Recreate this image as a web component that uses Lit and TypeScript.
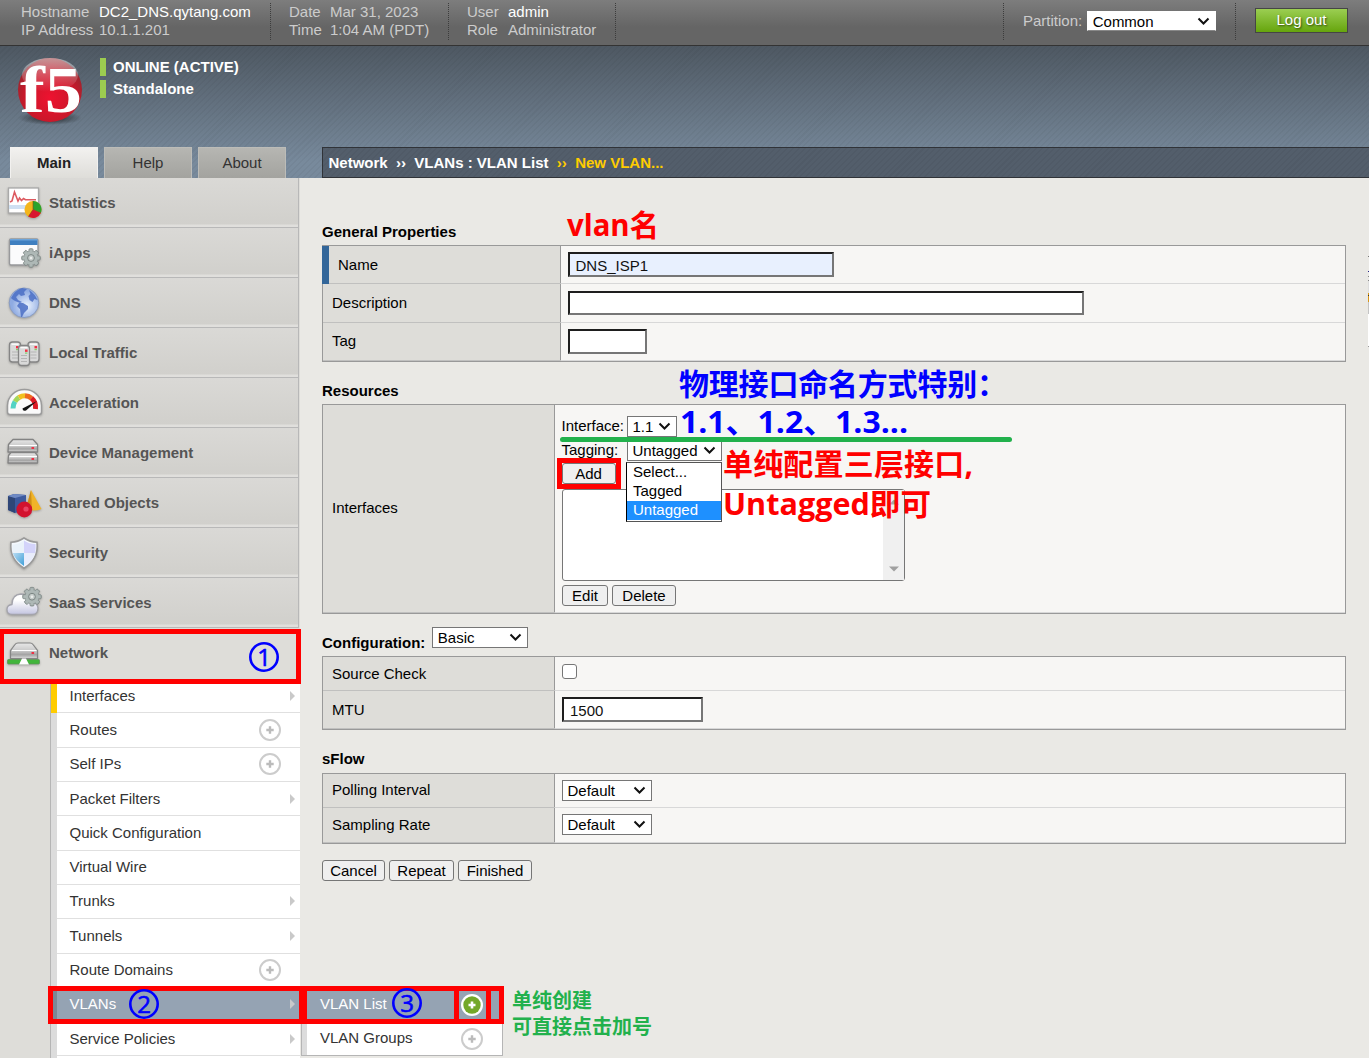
import { LitElement, html, css, svg, nothing } from "lit";
import { customElement, property } from "lit/decorators.js";
import { classMap } from "lit/directives/class-map.js";

const gear = (cx: number, cy: number, r: number) => svg`
  <g transform="translate(${cx} ${cy})">
    ${[0, 45, 90, 135].map(
      (a) => svg`<rect x="-2" y=${-r} width="4" height=${r * 2} rx="1" fill="#a3adab" stroke="#7b8583" stroke-width=".8" transform="rotate(${a})"/>`
    )}
    <circle r=${r - 2.2} fill="#aeb8b6" stroke="#87918f" stroke-width=".8"/>
    ${[0, 45, 90, 135].map(
      (a) => svg`<rect x="-1.5" y=${-r + 1} width="3" height=${r * 2 - 2} fill="#aeb8b6" transform="rotate(${a})"/>`
    )}
    <circle r="3.4" fill="#c4cbc9" stroke="#7b8583" stroke-width="1"/>
    <circle r="1.3" fill="#e9ecea"/>
  </g>`;

const tower = (x: number, y: number, h: number) => svg`
  <rect x=${x} y=${y} width="11" height=${h} rx="3" fill="#d9d9d9" stroke="#858585" stroke-width="1.3"/>
  <path d="M${x + 2} ${y + 2.2}h7" stroke="#fff" stroke-width="1.2"/>
  <path d="M${x + 2.5} ${y + 10}h6M${x + 2.5} ${y + 13}h6M${x + 2.5} ${y + 16}h6" stroke="#b5b5b5"/>
  <rect x=${x + 6.5} y=${y + 4} width="2.6" height="2.4" fill="#ee3344"/>
  <rect x=${x + 6.5} y=${y + 7} width="2.4" height="1.2" fill="#7fd069"/>`;

const icons: Record<string, unknown> = {
  stats: svg`
    <rect x="8.5" y="10" width="30" height="25" fill="#fff" stroke="#a9a9a9" stroke-width="1.3"/>
    <path d="M9 27h29v4H9z" fill="#cfe0f2"/>
    <path d="M10 24l2-1 2.500-9 3.500 9 1.500-3 2 2.500 2-2 2 1.200H36" fill="none" stroke="#dd5a60" stroke-width="1.600"/>
    <circle cx="33" cy="31.500" r="8.500" fill="#f3b51c"/>
    <path d="M33 31.500V23a8.500 8.500 0 0 1 7.800 12z" fill="#2ba32d"/>
    <path d="M33 31.500l7.800 3.500a8.500 8.500 0 0 1-12.500 3.600z" fill="#d9152f"/>
    <path d="M33 23v8.500l8 3.500M33 31.500L28.500 38.500" stroke="#8a4a10" stroke-width=".6" fill="none"/>`,
  iapps: svg`
    <rect x="9.500" y="11" width="28.500" height="26" rx="1.500" fill="#fbfbfc" stroke="#98999b" stroke-width="1.400"/>
    <path d="M10 11.500h27.500V17H10z" fill="#3f7fc0"/><path d="M10 11h27.500v1.500H10z" fill="#6ca4da"/>
    ${gear(31, 30, 9.3)}`,
  dns: svg`
    <circle cx="24" cy="24.800" r="14.800" fill="url(#globe)" stroke="#8a9cc0" stroke-width="1"/>
    <path d="M11 20q4-8 11-10l5 1-3 3 1 3-4 1-2-2-3 3 2 3 4 2-2 1-5-2-3-2z" fill="#4b6fc4" opacity=".85"/>
    <path d="M19 25l4 0 5 3 0 3-4 4-2 4-1 0-1-8-3-3z" fill="#4b6fc4" opacity=".85"/>
    <path d="M29 12q6 4 8.500 10l-3-1-2 3-3-2-1-4 2-2z" fill="#4b6fc4" opacity=".85"/>`,
  traffic: svg`${tower(9.5, 14, 20)}${tower(28, 14, 20)}${tower(18.5, 17.5, 20)}`,
  accel: svg`
    <path d="M7.500 34V27.500a17 16 0 0 1 34 0v6.500q0 2.500-2.500 2.500H10q-2.500 0-2.500-2.500z" fill="#fafafa" stroke="#9b9b9b" stroke-width="1.500"/>
    <g fill="none" stroke-width="5">
      <path d="M13 30.500a11.500 12 0 0 1 2-7" stroke="#52d3c4"/>
      <path d="M15 23.500a11.500 12 0 0 1 4-4" stroke="#a3d65a"/>
      <path d="M19 19.500a11.500 11 0 0 1 6-1.700" stroke="#f2c01f"/>
      <path d="M25 17.800a11.500 11 0 0 1 6.500 2.400" stroke="#ee6a1d"/>
      <path d="M31.500 20.200a11.500 12 0 0 1 4 10.800" stroke="#dc1a24"/>
    </g>
    <path d="M22.500 30.500L37 23l-11 9.500q-3.500 1-3.500-2z" fill="#111"/>`,
  device: svg`
    ${[0, 11].map(
      (d) => svg`<path d="M8.500 ${16.5 + d}l${d ? 2.5 : 4.5}-${d ? 3 : 5}h${d ? 24 : 20}l${d ? 2.5 : 4.5} ${d ? 3 : 5}v7.500h-29.500z" fill="url(#metal)" stroke="#838383" stroke-width="1.300" stroke-linejoin="round"/>
      <path d="M9.500 ${17.5 + d}h27.500" stroke="#fff" stroke-width="1.100"/>
      <rect x="31.500" y=${19 + d} width="2.600" height="2" fill="#ee3044"/>`
    )}`,
  shared: svg`
    <path d="M8 18l6-2 12 1v15l-11 3-7-3z" fill="#3d5a9e"/><path d="M8 18l7 2v15l-7-3z" fill="#2f4677"/><path d="M8 18l6-2 12 1-11 3z" fill="#6f8ac4"/>
    <path d="M31 12l10.500 19q-7 3-15.500 0z" fill="#f0b429"/><path d="M31 12l-5 19 6 1.500z" fill="#cf8f17"/>
    <circle cx="24.300" cy="31.500" r="7.900" fill="#d2122e"/><circle cx="26" cy="31" r="2.600" fill="#e84462"/>`,
  security: svg`
    <path d="M24 10q6 4 13 4.200 2 17-13 26-15-9-13-26 7-.2 13-4.200z" fill="#f4f8fd" stroke="#9a9a9a" stroke-width="1.600"/>
    <path d="M24 12.500q5 3.500 11.500 3.600.5 4-.4 8.900H24z" fill="#d3d3fa"/>
    <path d="M12.700 25H24v13q-9-6-11.300-13z" fill="url(#shieldblue)"/>
    <path d="M24 25h11.200q-2 7.500-11.200 13z" fill="#e9edfc"/>
    <path d="M12.500 16.500q6 0 11.500-4V25H12.700q-.8-4-.2-8.500z" fill="#eaf2fa"/>`,
  saas: svg`
    <path d="M12 36.500q-5 0-5-5 0-4.500 5-5 0-10 9-10.500 8 0 9.500 8 7 .5 7.500 6 0 6.500-6 6.500z" fill="url(#cloud)" stroke="#a4a4ac" stroke-width="1.300"/>
    ${gear(32, 18.7, 9.3)}`,
  network: svg`
    <path d="M10.500 22.500l4.500-6q1-1.500 3-1.500h12q2 0 3 1.500l4.500 6v8h-27z" fill="url(#metal)" stroke="#858585" stroke-width="1.200"/>
    <path d="M12 22.500h24.500" stroke="#fff"/><rect x="31.500" y="24" width="2.600" height="2" fill="#ee3044"/>
    <rect x="7.500" y="31.500" width="32" height="4.500" rx="1" fill="#42b53b" stroke="#5c8f58" stroke-width=".7"/>
    <path d="M19 36.500l3-6h4l3 6z" fill="#fff"/>`,
};

const chevron = html`<svg class="chev" width="13" height="9" viewBox="0 0 13 9"><path d="M1.500 1.500l5 5 5-5" fill="none" stroke="#111" stroke-width="2"/></svg>`;

@customElement("f5-select")
class F5Select extends LitElement {
  @property() value = "";
  static styles = css`
    :host { display: flex; box-sizing: border-box; height: 21px; border: 1px solid #767676; background: #fff; color: #000; align-items: center; justify-content: space-between; padding: 0 5px 0 4.500px; font: 15px/19px "Liberation Sans", Arial, sans-serif; }
    .chev { flex: none; }
  `;
  render() {
    return html`<span>${this.value}</span>${chevron}`;
  }
}

@customElement("plus-badge")
class PlusBadge extends LitElement {
  @property({ type: Boolean }) active = false;
  static styles = css`:host { display: block; height: 24px; } svg { display: block; }`;
  render() {
    return this.active
      ? html`<svg width="24" height="24" viewBox="0 0 24 24"><circle cx="12" cy="12" r="11" fill="#fff"/><circle cx="12" cy="12" r="8.700" fill="#74a829"/><path d="M12 8.500v7M8.500 12h7" stroke="#fff" stroke-width="2.600"/></svg>`
      : html`<svg width="24" height="24" viewBox="0 0 24 24"><circle cx="12" cy="12" r="10" fill="#fff" stroke="#ccc" stroke-width="2"/><path d="M12 8.300v7.400M8.300 12h7.400" stroke="#bbb" stroke-width="2.400"/></svg>`;
  }
}

@customElement("side-nav")
class SideNav extends LitElement {
  private menu: [string, string][] = [
    ["stats", "Statistics"], ["iapps", "iApps"], ["dns", "DNS"], ["traffic", "Local Traffic"],
    ["accel", "Acceleration"], ["device", "Device Management"], ["shared", "Shared Objects"],
    ["security", "Security"], ["saas", "SaaS Services"], ["network", "Network"],
  ];
  private sub: [string, string, number, boolean][] = [
    ["Interfaces", "arrow", 34, false], ["Routes", "plus", 35, false], ["Self IPs", "plus", 34, true], ["Packet Filters", "arrow", 34, false],
    ["Quick Configuration", "", 35, false], ["Virtual Wire", "", 34, true], ["Trunks", "arrow", 34, true], ["Tunnels", "arrow", 35, false],
    ["Route Domains", "plus", 34, true], ["VLANs", "arrow", 35, true], ["Service Policies", "arrow", 33, false], ["", "", 34, false],
  ];
  static styles = css`
    :host { display: block; width: 300px; background: #deddd9; font: 15px/20px "Liberation Sans", Arial, sans-serif; }
    .item { box-sizing: border-box; width: 299px; height: 50px; display: flex; align-items: center; color: #555; font-weight: bold; border-right: 1px solid #b8b8b8; border-bottom: 1px solid #b8b8b8; background: linear-gradient(#dad9d6, #d1d0cc 46px, #e0dfdc 47px, #e0dfdc); }
    .item.open { height: 51px; background: #deddd9; border: 0; padding-bottom: 2px; }
    .item svg { flex: none; width: 49px; height: 50px; margin-top: 1px; filter: drop-shadow(0 1px 1px rgba(0,0,0,.25)); }
    .list { margin-left: 50px; border-left: 1px solid #b5b5b5; background: #dcdcdc; padding-left: 6px; }
    .entry { box-sizing: border-box; display: flex; align-items: center; background: #fff; border-bottom: 1px solid #e0e0e0; color: #333; padding: 0 5px 0 12.5px; justify-content: space-between; width: 243px; }
    .entry.up { padding-bottom: 2px; }
    .h33 { height: 33px; } .h34 { height: 34px; } .h35 { height: 35px; }
    .first { box-shadow: -6px 0 0 #fc0; }
    .on { background: #95a3b3; color: #fff; box-shadow: -6px 0 0 #7b8896; }
    plus-badge { margin-right: 13px; }
    .arrow { width: 5px; height: 10px; }
    .side { display: flex; }
  `;
  render() {
    return html`
      ${this.menu.map(
        ([icon, label]) => html`<div class=${classMap({ item: true, open: icon === "network" })}>
          <svg viewBox="0 0 49 50">
            <defs>
              <radialGradient id="globe" cx=".6" cy=".6"><stop offset="0" stop-color="#eaf2fd"/><stop offset="1" stop-color="#8fabe2"/></radialGradient>
              <linearGradient id="metal" x2="0" y2="1"><stop offset="0" stop-color="#e8e8e8"/><stop offset=".5" stop-color="#c9c9c9"/><stop offset=".75" stop-color="#a4a4a4"/><stop offset="1" stop-color="#dadada"/></linearGradient>
              <linearGradient id="cloud" x2="0" y2="1"><stop offset=".3" stop-color="#fff"/><stop offset="1" stop-color="#c3c4e0"/></linearGradient>
              <linearGradient id="shieldblue" x2="1" y2="1"><stop offset="0" stop-color="#b9dcf2"/><stop offset="1" stop-color="#3f9fd8"/></linearGradient>
            </defs>
            ${icons[icon]}
          </svg><span>${label}</span></div>`
      )}
      <div class="list">
        ${this.sub.map(
          ([label, kind, h, up], i) => html`<div class=${classMap({ entry: true, up, first: i === 0, on: label === "VLANs", ["h" + h]: true })}>
            <span>${label}</span>
            <span class="side">${kind === "plus" ? html`<plus-badge></plus-badge>` : kind === "arrow" ? html`<svg class="arrow" viewBox="0 0 5 10"><path d="M0 0l5 5-5 5z" fill="#c9c9c9"/></svg>` : nothing}</span>
          </div>`
        )}
      </div>`;
  }
}

@customElement("vlan-form")
class VlanForm extends LitElement {
  static styles = css`
    :host { display: block; padding: 0 23px 0 22px; color: #000; font: 15px/20px "Liberation Sans", Arial, sans-serif; }
    h2 { box-sizing: border-box; margin: 0; font-size: 15px; line-height: 20px; display: flex; align-items: flex-end; padding-bottom: 3px; }
    .h67 { height: 67px; } .h42 { height: 42px; } .h43 { height: 43px; padding-bottom: 4px; }
    .conf { gap: 7px; } .conf f5-select { width: 96px; font-weight: normal; margin-bottom: 5px; }
    .table { border: 1px solid #999; background: #f7f6f4; }
    .row { box-sizing: border-box; display: grid; grid-template-columns: 232px 1fr; border-bottom: 1px solid #d8d8d8; }
    .wide .row { grid-template-columns: 238px 1fr; }
    .row > label { box-sizing: border-box; display: flex; align-items: center; background: #deddd9; border-right: 1px solid #999; box-shadow: 0 1px 0 #c0c0bf; padding-left: 9px; }
    .row > label.up { padding-bottom: 2px; }
    .row > label.req { position: relative; padding-left: 15px; }
    .req::before { content: ""; position: absolute; left: -1px; top: 0; bottom: -1px; width: 7px; background: #369; }
    .r34 { height: 34px; } .r35 { height: 35px; } .r38 { height: 38px; } .r39 { height: 39px; } .r208 { height: 208px; }
    .cell { padding-left: 7px; min-width: 0; }
    input.t { box-sizing: border-box; display: block; height: 25px; border: 2px solid; border-color: #1e1e1e #767676 #767676 #1e1e1e; border-radius: 0; background: #fff; font: 15px/19px "Liberation Sans", Arial, sans-serif; padding: 1px 5px 0; color: #111; outline: 0; margin: 6px 0 0; }
    input.name { width: 266px; background: #e8f0fe; padding-left: 5.500px; }
    input.desc { width: 516px; height: 24px; margin-top: 7px; } .tag { width: 79px; } input.mtu { width: 141px; padding-left: 6px; }
    .chk { box-sizing: border-box; width: 15px; height: 15px; margin: 6.500px 0 0; border: 1px solid #767676; border-radius: 3px; background: #fff; }
    .def { width: 90px; margin-top: 6px; }
    button { box-sizing: border-box; height: 21px; border: 1px solid #767676; border-radius: 3px; background: #efefef; font: 15px/19px "Liberation Sans", Arial, sans-serif; padding: 0; color: #000; text-align: center; }
    .line { display: flex; align-items: center; }
    .line > span { width: 65px; margin-left: -.5px; margin-right: .5px; }
    .l1 { margin-top: 11px; height: 21px; } .l1 > span { margin-top: -1px; } .l1 f5-select { width: 50px; }
    .l2 { margin-top: 3px; height: 21px; } .l2 > span { margin-top: -2px; } .l2 f5-select { width: 95px; }
    .add { display: block; width: 54px; margin-top: 2px; padding-right: 1px; }
    .box { box-sizing: border-box; width: 343px; height: 92px; margin-top: 5px; border: 1px solid #767676; border-radius: 3px; background: #fff; display: flex; justify-content: flex-end; }
    .bar { width: 21px; background: #f0f0f0; display: flex; flex-direction: column; justify-content: space-between; align-items: center; padding: 9px 0 8px; box-sizing: border-box; }
    .btns { display: flex; gap: 4px; margin-top: 4px; }
    .pop-host { position: relative; }
    .pop { position: absolute; left: -1px; top: 22px; box-sizing: border-box; width: 96px; height: 60px; border: 1px solid #555; border-left-color: #000; background: #fff; z-index: 2; line-height: 17px; }
    .pop div { box-sizing: border-box; padding-left: 6px; height: 19px; } .pop .sel { background: #1e90ff; color: #fff; }
    .w46 { width: 46px; } .w64 { width: 64px; } .w63 { width: 63px; } .w65 { width: 65px; } .w74 { width: 74px; }
    .foot { margin-top: 16px; }
  `;
  render() {
    return html`
      <h2 class="h67">General Properties</h2>
      <div class="table wide">
        <div class="row r38"><label class="req">Name</label><div class="cell"><input class="t name" .value=${"DNS_ISP1"}></div></div>
        <div class="row r39"><label>Description</label><div class="cell"><input class="t desc"></div></div>
        <div class="row r38"><label class="up">Tag</label><div class="cell"><input class="t tag"></div></div>
      </div>
      <h2 class="h42">Resources</h2>
      <div class="table">
        <div class="row r208"><label class="up">Interfaces</label><div class="cell">
          <div class="line l1"><span>Interface:</span><f5-select value="1.1"></f5-select></div>
          <div class="line l2"><span>Tagging:</span><div class="pop-host"><f5-select value="Untagged"></f5-select>
            <div class="pop"><div>Select...</div><div>Tagged</div><div class="sel">Untagged</div></div></div></div>
          <button class="add">Add</button>
          <div class="box"><div class="bar">
            <svg width="10" height="6"><path d="M0 5.500l5-5 5 5z" fill="#a5a5a5"/></svg>
            <svg width="10" height="6"><path d="M0 .5l5 5 5-5z" fill="#a0a0a0"/></svg></div></div>
          <div class="btns"><button class="w46">Edit</button><button class="w64">Delete</button></div>
        </div></div>
      </div>
      <h2 class="h42 conf">Configuration: <f5-select value="Basic"></f5-select></h2>
      <div class="table">
        <div class="row r34"><label>Source Check</label><div class="cell"><div class="chk" role="checkbox" aria-checked="false"></div></div></div>
        <div class="row r38"><label>MTU</label><div class="cell"><input class="t mtu" .value=${"1500"}></div></div>
      </div>
      <h2 class="h43">sFlow</h2>
      <div class="table">
        <div class="row r34"><label class="up">Polling Interval</label><div class="cell"><f5-select class="def" value="Default"></f5-select></div></div>
        <div class="row r35"><label>Sampling Rate</label><div class="cell"><f5-select class="def" value="Default"></f5-select></div></div>
      </div>
      <div class="btns foot"><button class="w63">Cancel</button><button class="w65">Repeat</button><button class="w74">Finished</button></div>`;
  }
}

@customElement("note-layer")
class NoteLayer extends LitElement {
  static styles = css`
    :host { position: absolute; inset: 0; z-index: 5; pointer-events: none; }
    svg { display: block; }
    text { font-family: "Open Sans", "Noto Sans CJK SC", sans-serif; font-weight: bold; }
    .red { fill: #f00; } .blue { fill: #00f; } .green { fill: #22b14c; }
    .box { fill: none; stroke: #f00; stroke-width: 5; }
    .ring { fill: none; stroke: #00f; stroke-width: 2.600; }
    .num { font-weight: 400; font-size: 24px; text-anchor: middle; stroke: #00f; stroke-width: .6; }
  `;
  render() {
    const badges: [number, number, string][] = [[264, 657, "1"], [144, 1004, "2"], [407, 1003, "3"]];
    return html`<svg width="1369" height="1058" viewBox="0 0 1369 1058">
      <text class="red" x="567" y="235.500" font-size="30" textLength="92" lengthAdjust="spacingAndGlyphs">vlan名</text>
      <text class="blue" x="679" y="395" font-size="30" textLength="328">物理接口命名方式特别：</text>
      <text class="blue" x="680" y="433" font-size="31" textLength="228" lengthAdjust="spacingAndGlyphs">1.1、1.2、1.3...</text>
      <text class="red" x="723" y="475" font-size="30" textLength="250">单纯配置三层接口,</text>
      <text class="red" x="723" y="514.500" font-size="30" textLength="208" lengthAdjust="spacingAndGlyphs">Untagged即可</text>
      <text class="green" x="512" y="1008" font-size="20" textLength="80">单纯创建</text>
      <text class="green" x="512" y="1034" font-size="20" textLength="140">可直接点击加号</text>
      <path d="M562.500 439.500H1009.500" stroke="#22b14c" stroke-width="5" stroke-linecap="round"/>
      <rect class="box" x="1.500" y="631.500" width="297" height="50"/>
      <rect class="box" x="559.500" y="460.500" width="59" height="26"/>
      <rect class="box" x="50.500" y="988.500" width="251" height="33"/>
      <rect class="box" x="304.500" y="988.500" width="197" height="33"/>
      <path class="box" d="M456.500 988V1022M488.500 988V1022"/>
      ${badges.map(([x, y, n]) => svg`<circle class="ring" cx=${x} cy=${y} r="13.700"/><text class="num blue" x=${x} y=${y + 8.5}>${n}</text>`)}
    </svg>`;
  }
}

@customElement("app-root")
export class AppRoot extends LitElement {
  static styles = css`
    :host { display: block; position: relative; width: 1369px; height: 1058px; overflow: hidden; background: #eae9e5; font: 15px/18px "Liberation Sans", Arial, sans-serif; color: #000; }
    .top { box-sizing: border-box; height: 46px; border-bottom: 1px solid #333; background: linear-gradient(#7d7d7d, #656565 60%); display: flex; padding: 3px 21px 5px; color: #ccc; }
    .grp { box-sizing: border-box; height: 37px; display: grid; grid-template-columns: auto 1fr; border-right: 1px dotted #3c3c3c; column-gap: 0; align-content: start; white-space: nowrap; }
    .g1 { width: 250px; grid-template-columns: 78px 1fr; } .g2 { width: 178px; grid-template-columns: 41px 1fr; padding-left: 18px; } .g3 { width: 167px; grid-template-columns: 41px 1fr; padding-left: 18px; }
    .grp b { font-weight: normal; color: #fff; }
    .part { box-sizing: border-box; margin-left: auto; width: 233px; height: 37px; border: 1px dotted #3c3c3c; border-width: 0 1px; display: flex; padding: 8px 0 0 19px; gap: 5px; align-items: flex-start; }
    .part span { margin-top: 1px; }
    .part f5-select { width: 129px; height: 20px; border-color: #fff #fff #888; }
    .out { box-sizing: border-box; width: 93px; height: 25px; margin: 5px 0 0 19px; border: 1px solid #454545; background: linear-gradient(#9bce52, #66a50d); color: #fff; text-align: center; line-height: 22px; text-shadow: 1px 1px 2px rgba(0,0,0,.6); }
    .banner { box-sizing: border-box; height: 132px; background: repeating-linear-gradient(135deg, rgba(0,0,0,.035) 0 1.500px, transparent 1.500px 4.200px), linear-gradient(#4e5862, #788a9c 88%); display: flex; flex-direction: column; justify-content: space-between; }
    .id { display: flex; padding: 4px 0 0 12px; }
    .state { padding: 8px 0 0 12px; display: flex; flex-direction: column; gap: 4px; color: #fff; font-weight: bold; }
    .state div { display: flex; height: 18px; gap: 7px; } .state i { width: 6px; background: #9ccc50; }
    .nav { display: flex; padding-left: 10px; height: 31px; }
    .tab { box-sizing: border-box; width: 88px; margin-right: 6px; background: linear-gradient(#b6b6b2, #a3a39f); border: 1px solid #bcbcb8; border-bottom: 0; text-align: center; line-height: 30px; color: #333; }
    .tab.on { background: linear-gradient(#f2f1ef, #deddd9); border-color: #f2f1ef; font-weight: bold; color: #222; }
    .crumb { box-sizing: border-box; flex: 1; margin-left: 30px; border: 1px solid #303338; border-right: 0; background: repeating-linear-gradient(135deg, rgba(0,0,0,.04) 0 1.500px, transparent 1.500px 4.200px), #535e6b; color: #fff; font-weight: bold; line-height: 29px; padding-left: 5.500px; white-space: pre; }
    .crumb em { font-style: normal; color: #fc0; }
    .body { display: grid; grid-template-columns: 300px 1fr; height: 880px; overflow: hidden; }
    .fly { position: absolute; left: 301px; top: 988px; width: 202px; box-sizing: border-box; height: 68px; border: 1px solid #b5b5b5; border-top: 0; background: #fff; box-shadow: inset 5px 0 0 #dcdcdc; line-height: 20px; color: #333; }
    .fly div { display: flex; justify-content: space-between; align-items: center; padding: 0 18px 1px 18px; height: 34px; box-sizing: border-box; }
    .fly div > span { margin-top: -1px; }
    .fly .on { background: #95a3b3; color: #fff; padding-bottom: 2px; } .fly .on plus-badge { margin-top: 2px; }
    .edge { position: absolute; right: 0; top: 256px; width: 1px; height: 91px; background: linear-gradient(#777 0 1px, #eae9e5 1px 15px, #228 15px 16px, #eae9e5 16px 20px, #888 20px 21px, #eae9e5 21px 24px, #888 24px 25px, #ddd 25px 37px, #d8961a 37px 39px, #333 39px 40px, #d8961a 40px 46px, #c4c4c4 46px 58px, #fff 58px 90px, #999 90px); }
  `;
  render() {
    return html`
      <div class="top">
        <div class="grp g1"><span>Hostname</span><b>DC2_DNS.qytang.com</b><span>IP Address</span><span>10.1.1.201</span></div>
        <div class="grp g2"><span>Date</span><span>Mar 31, 2023</span><span>Time</span><span>1:04 AM (PDT)</span></div>
        <div class="grp g3"><span>User</span><b>admin</b><span>Role</span><span>Administrator</span></div>
        <div class="part"><span>Partition:</span><f5-select value="Common"></f5-select></div>
        <div class="out">Log out</div>
      </div>
      <div class="banner">
        <div class="id">
          <svg width="76" height="80" viewBox="12 50 76 80">
            <defs>
              <radialGradient id="ball" cx=".5" cy=".62" r=".62"><stop offset="0" stop-color="#ee1230"/><stop offset=".65" stop-color="#c8182a"/><stop offset="1" stop-color="#8e2a30"/></radialGradient>
              <linearGradient id="shine" x2="0" y2="1"><stop offset="0" stop-color="#fff" stop-opacity=".5"/><stop offset="1" stop-color="#fff" stop-opacity="0"/></linearGradient>
              <radialGradient id="shade"><stop offset="0" stop-color="#111" stop-opacity=".8"/><stop offset="1" stop-color="#111" stop-opacity="0"/></radialGradient>
            </defs>
            <ellipse cx="50" cy="118" rx="32" ry="7" fill="url(#shade)"/>
            <circle cx="50" cy="90" r="32" fill="url(#ball)"/>
            <ellipse cx="50" cy="75" rx="28" ry="17" fill="url(#shine)"/>
            <text x="20" y="112" fill="#fff" font-size="66" font-family="Liberation Serif, serif" font-weight="bold" textLength="62" lengthAdjust="spacingAndGlyphs">f5</text>
          </svg>
          <div class="state"><div><i></i><span>ONLINE (ACTIVE)</span></div><div><i></i><span>Standalone</span></div></div>
        </div>
        <div class="nav">
          <div class="tab on">Main</div><div class="tab">Help</div><div class="tab">About</div>
          <div class="crumb">Network  ››  VLANs : VLAN List  <em>››  New VLAN...</em></div>
        </div>
      </div>
      <div class="body"><side-nav></side-nav><vlan-form></vlan-form></div>
      <div class="fly">
        <div class="on"><span>VLAN List</span><plus-badge active></plus-badge></div>
        <div><span>VLAN Groups</span><plus-badge></plus-badge></div>
      </div>
      <div class="edge"></div>
      <note-layer></note-layer>`;
  }
}
